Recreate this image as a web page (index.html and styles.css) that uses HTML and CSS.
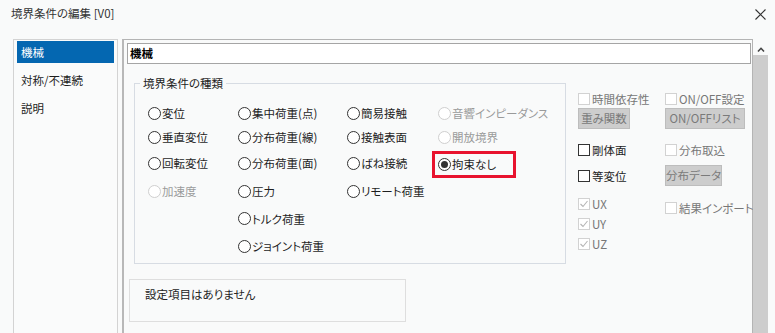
FILE: index.html
```html
<!DOCTYPE html>
<html lang="ja">
<head>
<meta charset="UTF-8" />
<title>境界条件の編集 [V0]</title>
<link rel="stylesheet" href="styles.css">
</head>
<body>

<div class="titlebar">
  <span class="title">境界条件の編集 [V0]</span>
  <svg class="close" width="11" height="11" viewBox="0 0 11 11">
    <path d="M0.5 0.5 L10.5 10.5 M10.5 0.5 L0.5 10.5" stroke="#333" stroke-width="1.1" fill="none"/>
  </svg>
</div>

<div class="main">
  <div class="nav">
    <div class="nav-item active">機械</div>
    <div class="nav-item">対称/不連続</div>
    <div class="nav-item">説明</div>
  </div>

  <div class="panel">
    <div class="header-box">機械</div>

    <div class="content">
      <fieldset class="group">
        <legend>境界条件の種類</legend>
        <div class="radios">
          <label class="opt"><span class="radio"></span>変位</label>
          <label class="opt"><span class="radio"></span>集中荷重(点)</label>
          <label class="opt"><span class="radio"></span>簡易接触</label>
          <label class="opt off"><span class="radio"></span>音響インピーダンス</label>

          <label class="opt"><span class="radio"></span>垂直変位</label>
          <label class="opt"><span class="radio"></span>分布荷重(線)</label>
          <label class="opt"><span class="radio"></span>接触表面</label>
          <label class="opt off"><span class="radio"></span>開放境界</label>

          <label class="opt"><span class="radio"></span>回転変位</label>
          <label class="opt"><span class="radio"></span>分布荷重(面)</label>
          <label class="opt"><span class="radio"></span>ばね接続</label>
          <label class="opt marked"><span class="radio on"></span>拘束なし</label>

          <label class="opt off"><span class="radio"></span>加速度</label>
          <label class="opt"><span class="radio"></span>圧力</label>
          <label class="opt"><span class="radio"></span>リモート荷重</label>
          <span></span>

          <span></span>
          <label class="opt"><span class="radio"></span>トルク荷重</label>
          <span></span>
          <span></span>

          <span></span>
          <label class="opt"><span class="radio"></span>ジョイント荷重</label>
        </div>
      </fieldset>

      <div class="opts">
        <div class="row row-a">
          <label class="check off"><span class="box"></span>時間依存性</label>
          <label class="check off"><span class="box"></span>ON/OFF設定</label>
        </div>
        <div class="row row-b">
          <span class="btn btn-weight">重み関数</span>
          <span class="btn btn-list">ON/OFFリスト</span>
        </div>
        <div class="row row-c">
          <label class="check"><span class="box"></span>剛体面</label>
          <label class="check off"><span class="box"></span>分布取込</label>
        </div>
        <div class="row row-d">
          <label class="check"><span class="box"></span>等変位</label>
          <span class="btn btn-data">分布データ</span>
        </div>
        <div class="row row-e">
          <label class="check off"><span class="box ticked"><svg width="10" height="10" viewBox="0 0 10 10"><path d="M1.5 5 L4 7.5 L8.5 2" stroke="#b5b5b5" stroke-width="1.1" fill="none"/></svg></span>UX</label>
          <label class="check off late"><span class="box"></span>結果インポート</label>
        </div>
        <div class="row row-f">
          <label class="check off"><span class="box ticked"><svg width="10" height="10" viewBox="0 0 10 10"><path d="M1.5 5 L4 7.5 L8.5 2" stroke="#b5b5b5" stroke-width="1.1" fill="none"/></svg></span>UY</label>
        </div>
        <div class="row row-f">
          <label class="check off"><span class="box ticked"><svg width="10" height="10" viewBox="0 0 10 10"><path d="M1.5 5 L4 7.5 L8.5 2" stroke="#b5b5b5" stroke-width="1.1" fill="none"/></svg></span>UZ</label>
        </div>
      </div>
    </div>

    <div class="note">設定項目はありません</div>
  </div>

  <div class="scrollbar">
    <svg class="arrow" width="8" height="6" viewBox="0 0 8 6">
      <path d="M1 5 L4 1.8 L7 5" stroke="#444" stroke-width="1.6" fill="none"/>
    </svg>
    <div class="thumb"></div>
  </div>
</div>

</body>
</html>
```

FILE: styles.css
```css
body {
  margin: 0;
  width: 775px;
  height: 333px;
  overflow: hidden;
  background: #f9fafa;
  font-family: "Noto Sans CJK JP", "Noto Sans", sans-serif;
  font-size: 11.5px;
  font-feature-settings: "palt";
  color: #1e1e1e;
}

/* タイトル */
.titlebar {
  height: 39px;
  box-sizing: border-box;
  padding: 5px 0 0 11px;
  display: flex;
  align-items: flex-start;
  justify-content: space-between;
  color: #333;
}

.close {
  margin: 4px 9px 0 0;
}

.main {
  display: flex;
  height: 294px;
  padding-left: 13px;
}

/* 左のリスト */
.nav {
  width: 105px;
  box-sizing: border-box;
  border: 1px solid #d3d3d3;
  border-bottom: none;
  padding: 1px 3px;
  background: #fafbfb;
}

.nav-item {
  height: 22px;
  line-height: 22px;
  padding-left: 4px;
  margin-bottom: 6px;
}

.nav-item.active {
  background: #0467b1;
  color: #fff;
}

/* 右の設定パネル */
.panel {
  width: 631px;
  margin-left: 4px;
  box-sizing: border-box;
  border: 1px solid #b4b4b4;
  border-left: 2px solid #b8b8b8;
  border-bottom: none;
}

.header-box {
  height: 21px;
  box-sizing: border-box;
  margin: 3px 1px 0 3px;
  border: 1px solid #a5a5a5;
  background: #fff;
  font-weight: bold;
  line-height: 18px;
  padding-left: 2px;
  color: #000;
}

.content {
  display: flex;
  padding-left: 10px;
}

.group {
  width: 435px;
  height: 188px;
  box-sizing: border-box;
  margin: 12px 0 0;
  padding: 0;
  border: 1px solid #d7dce3;
  min-width: 0;
}

.group legend {
  margin-left: 5px;
  padding: 0 3px;
  line-height: 14px;
  color: #222;
}

.radios {
  display: grid;
  grid-template-columns: 90px 109px 91px auto;
  grid-template-rows: 24px 24px 28px 28px 27px 28px;
  padding: 11px 0 0 13px;
}

.opt {
  display: flex;
  align-items: center;
  white-space: nowrap;
}

.opt.off {
  color: #9a9a9a;
}

.radio {
  width: 11px;
  height: 11px;
  border: 1px solid #333;
  border-radius: 50%;
  margin-right: 1px;
  background: #fff;
  position: relative;
  flex: none;
}

.opt.off .radio {
  border-color: #cfcfcf;
}

.radio.on::after {
  content: "";
  position: absolute;
  left: 2px;
  top: 2px;
  width: 7px;
  height: 7px;
  border-radius: 50%;
  background: #333;
}

.opt.marked {
  justify-self: start;
  align-self: center;
  height: 27px;
  box-sizing: border-box;
  margin: 2px 0 0 -6px;
  border: 3px solid #e8132e;
  padding: 0 17px 0 3px;
}

/* 右のオプション */
.opts {
  margin: 28px 0 0 12px;
}

.row {
  display: flex;
}

.row > * {
  width: 87px;
  flex: none;
}

.row-a { height: 14px; }
.row-b { margin-top: 2px; }
.row-c { margin-top: 14px; height: 14px; }
.row-d { margin-top: 8px; align-items: center; }
.row-e { margin-top: 11px; height: 14px; }
.row-f { margin-top: 6px; height: 14px; }

.check {
  display: flex;
  align-items: center;
  white-space: nowrap;
}

.check.off {
  color: #777;
}

.check.late {
  margin-top: 8px;
}

.box {
  width: 10px;
  height: 10px;
  border: 1px solid #333;
  margin-right: 2px;
  background: #fff;
  flex: none;
  display: flex;
}

.check.off .box {
  border-color: #d2d2d2;
}

.btn {
  height: 21px;
  box-sizing: border-box;
  border: 1px solid #bdbdbd;
  background: #cdcdcd;
  color: #7a7a7a;
  line-height: 19px;
  text-align: center;
  white-space: nowrap;
}

.row .btn-weight { width: 52px; margin-right: 35px; }
.row .btn-list { width: 80px; }
.row .btn-data { width: 57px; }

.note {
  width: 277px;
  height: 43px;
  box-sizing: border-box;
  margin: 15px 0 0 5px;
  border: 1px solid #dedede;
  padding: 6px 0 0 15px;
  color: #222;
}

/* スクロールバー */
.scrollbar {
  width: 15px;
  display: flex;
  flex-direction: column;
  align-items: center;
}

.arrow {
  margin-top: 5px;
  height: 11px;
}

.thumb {
  align-self: stretch;
  flex: 1;
  background: #cdcdcd;
}
```
